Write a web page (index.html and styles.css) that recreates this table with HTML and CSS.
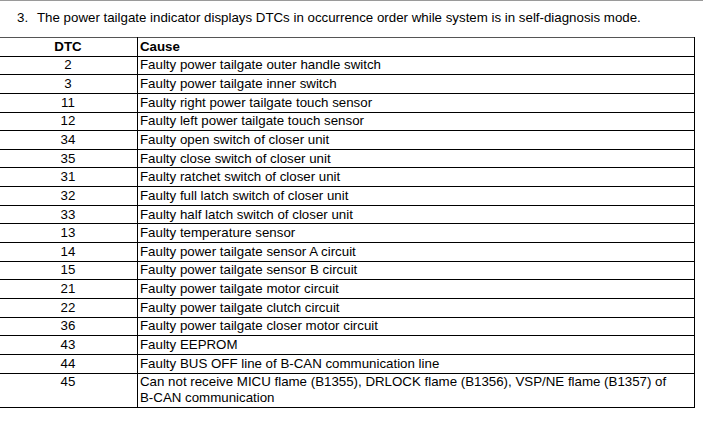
FILE: index.html
```html
<!DOCTYPE html>
<html>
<head>
<meta charset="utf-8">
<link rel="stylesheet" href="styles.css">
</head>
<body>
<div class="page">
  <p class="step"><span class="num">3.</span><span>The power tailgate indicator displays DTCs in occurrence order while system is in self-diagnosis mode.</span></p>
  <table class="dtc">
    <thead>
      <tr><th class="code">DTC</th><th class="cause">Cause</th></tr>
    </thead>
    <tbody>
      <tr><td class="code">2</td><td>Faulty power tailgate outer handle switch</td></tr>
      <tr><td class="code">3</td><td>Faulty power tailgate inner switch</td></tr>
      <tr><td class="code">11</td><td>Faulty right power tailgate touch sensor</td></tr>
      <tr><td class="code">12</td><td>Faulty left power tailgate touch sensor</td></tr>
      <tr><td class="code">34</td><td>Faulty open switch of closer unit</td></tr>
      <tr><td class="code">35</td><td>Faulty close switch of closer unit</td></tr>
      <tr><td class="code">31</td><td>Faulty ratchet switch of closer unit</td></tr>
      <tr><td class="code">32</td><td>Faulty full latch switch of closer unit</td></tr>
      <tr><td class="code">33</td><td>Faulty half latch switch of closer unit</td></tr>
      <tr><td class="code">13</td><td>Faulty temperature sensor</td></tr>
      <tr><td class="code">14</td><td>Faulty power tailgate sensor A circuit</td></tr>
      <tr><td class="code">15</td><td>Faulty power tailgate sensor B circuit</td></tr>
      <tr><td class="code">21</td><td>Faulty power tailgate motor circuit</td></tr>
      <tr><td class="code">22</td><td>Faulty power tailgate clutch circuit</td></tr>
      <tr><td class="code">36</td><td>Faulty power tailgate closer motor circuit</td></tr>
      <tr><td class="code">43</td><td>Faulty EEPROM</td></tr>
      <tr><td class="code">44</td><td>Faulty BUS OFF line of B-CAN communication line</td></tr>
      <tr><td class="code">45</td><td>Can not receive MICU flame (B1355), DRLOCK flame (B1356), VSP/NE flame (B1357) of<br>B-CAN communication</td></tr>
    </tbody>
  </table>
</div>
</body>
</html>
```
FILE: styles.css
```css
html, body {
  margin: 0;
  padding: 0;
  background: #ffffff;
}
.page {
  border-top: 1px solid #9a9a9a;
  font-family: "Liberation Sans", Arial, sans-serif;
  font-size: 13.3px;
  color: #000000;
  overflow: hidden;
  height: 425px;
}
.step {
  display: flex;
  margin: 0;
  padding: 9px 0 0 17px;
  line-height: 16px;
  height: 27px;
}
.step .num {
  width: 20px;
  flex: none;
}
.dtc {
  border-collapse: collapse;
  margin-left: -2px;
  width: 697px;
  line-height: 16px;
}
.dtc th, .dtc td {
  border: 1px solid #000000;
  padding: 0.8px 2px 0.85px 2px;
  vertical-align: top;
  text-align: left;
}
.dtc thead th {
  border-top-color: #555555;
  font-weight: bold;
}
.dtc .code {
  width: 134px;
  text-align: center;
}
```
